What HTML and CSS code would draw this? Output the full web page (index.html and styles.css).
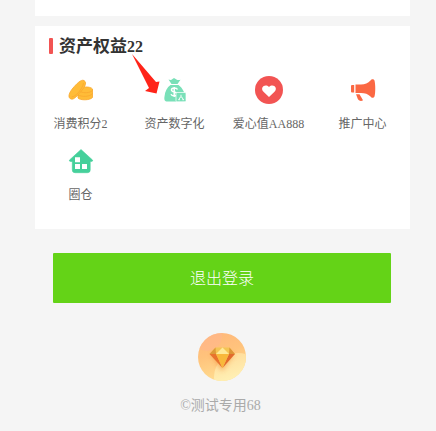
FILE: index.html
```html
<!DOCTYPE html>
<html lang="zh-CN">
<head>
<meta charset="utf-8">
<title>资产权益</title>
<link rel="stylesheet" href="styles.css">
</head>
<body>
<main class="page">
  <div class="previous"></div>
  <section class="card">
    <h2 class="title"><span>资产权益<span class="count">22</span></span></h2>
    <div class="grid">
      <a class="item">
        <svg class="icon" viewBox="0 0 28 28">
          <g fill="#ffbc38" stroke="#f9a72d" stroke-width=".8">
            <path d="M11 17v5c2 2.500 12 2.500 14.500-.5V13c-2-3-12-2.500-14.500 0z"/>
            <path d="M13 15.500c4 2 10 1.500 12.500-1M11 19c4 2 12 2 14.500-1.500" fill="none"/>
            <path d="M4 23c-4-1.500-1.500-7 2-11S14 3 17 4.500c4 2.500-.5 8-3.500 11.500S7 24 4 23z"/>
            <path d="M4.500 21c4 0 11-8 12-14" fill="none"/>
          </g>
        </svg>
        <span class="label">消费积分2</span>
      </a>
      <a class="item">
        <svg class="icon" viewBox="0 0 28 28">
          <g fill="#79e0b8">
            <path d="M7.500 3.500Q10 4.500 11.500 3L13 2l2.500 1.500q1.500 1 4 .2L16.500 8h-6z"/>
            <path d="M9.500 9h8c4 3 7 8 7 14 0 2-1 2.500-3 2.500H6.500c-3 0-3.500-2-3-5C4 15 6 11.500 9.500 9z"/>
          </g>
          <path d="M16.500 13.500c-1-2-6-2-6 .5 0 2.500 5.500 1.500 5.500 4 0 2.500-5 2.500-6 .2M13.200 11v10" fill="none" stroke="#fff" stroke-width="1.500"/>
          <rect x="15" y="16.500" width="10" height="9.200" rx="1" fill="#79e0b8" stroke="#fff" stroke-width=".7"/>
          <path d="M20 18.800v2M17.800 23.500l1.600-2.500h1.300l1.600 2.500M17.300 23.700h1.700M21.300 23.700H23" fill="none" stroke="#fff" stroke-width=".9"/>
        </svg>
        <span class="label">资产数字化</span>
      </a>
      <a class="item">
        <svg class="icon" viewBox="0 0 28 28">
          <circle cx="14" cy="14" r="14" fill="#f25453"/>
          <path d="M14 21l-5.500-5.200c-4-4 1.500-8.800 5.500-4.800 4-4 9.500.8 5.500 4.800z" fill="#fff"/>
        </svg>
        <span class="label">爱心值AA888</span>
      </a>
      <a class="item">
        <svg class="icon" viewBox="0 0 28 28">
          <g fill="#fb6843">
            <path d="M2 10q0-1 1-1h2.200v7.500H3q-1 0-1-1z"/>
            <path d="M6.500 8.500H12c4 0 7-1.500 9.500-4 1-1.500 3-2 4 0 1 4 1 12 0 16-1 2-3 1.500-4 0-2.500-2.500-5.500-3.500-9.500-3.500H6.500z"/>
            <path d="M7 18.300h3.500l3.500 6c-2 1.500-4.500.5-5.500-2z"/>
          </g>
        </svg>
        <span class="label">推广中心</span>
      </a>
      <a class="item">
        <svg class="icon" viewBox="0 0 28 28">
          <path d="M14 2.500L25.500 13q.7 1.300-1 1.500h-1.300V23q0 2.700-2.700 2.700H8Q5.300 25.700 5.300 23v-8.500H3.500Q1.800 14.300 2.500 13z" fill="#45d09b" stroke="#45d09b" stroke-width=".6"/>
          <path d="M8 10.200h5v5H8zM8 17h5v5H8zM15 17h5v5h-5z" fill="#fff"/>
        </svg>
        <span class="label">圈仓</span>
      </a>
    </div>
    <svg class="pointer" viewBox="0 0 28 42"><path d="M0 1L24 29 27.500 28.500 24.500 40.500 13 38 17 35z" fill="#ff2419"/></svg>
  </section>
  <button class="logout" type="button">退出登录</button>
  <footer class="footer">
    <svg class="logo" viewBox="0 0 48 48">
      <defs>
        <linearGradient id="disc" x1="0" y1="0" x2=".3" y2="1"><stop stop-color="#ffb67b"/><stop offset=".5" stop-color="#ffc37c"/><stop offset="1" stop-color="#ffdc90"/></linearGradient>
        <linearGradient id="light" x1="0" y1="0" x2=".3" y2="1"><stop stop-color="#ffd896"/><stop offset=".6" stop-color="#fff0b4"/></linearGradient>
        <clipPath id="round"><circle cx="24" cy="24" r="24"/></clipPath>
        <filter id="soft" x="-50%" y="-50%" width="200%" height="200%"><feGaussianBlur stdDeviation="2.500"/></filter>
      </defs>
      <g clip-path="url(#round)">
        <path d="M0 0h48v48H0z" fill="url(#disc)"/>
        <circle cx="9" cy="3" r="15" fill="#ffb88a" opacity=".7"/>
        <circle cx="40" cy="44" r="24" fill="url(#light)"/>
        <path d="M13 21l11 17 12-17z" fill="#f08b35" opacity=".6" filter="url(#soft)"/>
      </g>
      <path d="M17.500 14.500h14l5.500 6.500H11.500z" fill="#f4c554"/>
      <path d="M17.500 14.500l-6 6.500H18z" fill="#dd9a38"/>
      <path d="M31.500 14.500L37 21h-6z" fill="#dd9436"/>
      <path d="M18 21l6.500-6.500L31 21z" fill="#ffe998"/>
      <path d="M11.500 21H18l6.500 14z" fill="#e8722d"/>
      <path d="M37 21h-6l-6.500 14z" fill="#e26a2c"/>
      <path d="M18 21h13l-6.500 14z" fill="#f8b83b"/>
    </svg>
    <p class="copyright">©测试专用68</p>
  </footer>
</main>
</body>
</html>
```
FILE: styles.css
```css
* {
  box-sizing: border-box;
}

body {
  margin: 0;
  background: #f5f5f5;
  font-family: "Liberation Serif", "Noto Sans CJK SC", serif;
}

.page {
  width: 375px;
  height: 431px;
  margin-left: 35px;
  overflow: hidden;
}

.previous {
  height: 16px;
  margin-bottom: 10px;
  background: #fff;
}

.card {
  position: relative;
  height: 203px;
  padding-top: 10px;
  background: #fff;
}

.title {
  display: flex;
  align-items: center;
  gap: 6px;
  height: 20px;
  margin: 0 0 20px 14px;
  color: #333;
  font-size: 17px;
  font-weight: 600;
  line-height: 22px;
}

.title > span {
  padding-top: 1px;
}

.title::before {
  content: "";
  width: 4px;
  height: 16px;
  border-radius: 1px;
  background: #f25453;
}

.count {
  font-size: 16px;
}

.grid {
  display: grid;
  grid-template-columns: repeat(4, 94px);
  grid-auto-rows: 71px;
  margin-left: -1px;
}

.item {
  display: flex;
  flex-direction: column;
  align-items: center;
  gap: 11px;
  color: #666;
  font-size: 12px;
  line-height: 18px;
  white-space: nowrap;
}

.label {
  margin-right: 1px;
}

.icon {
  width: 28px;
  height: 28px;
}

.pointer {
  position: absolute;
  top: 27px;
  left: 97px;
  width: 28px;
  height: 42px;
}

.logout {
  display: block;
  width: 338px;
  height: 50px;
  margin: 24px 0 30px 18px;
  padding: 1px 0 0;
  border: 0;
  border-radius: 1px;
  background: #64d317;
  color: #fff;
  font: 300 16px/49px "Liberation Serif", "Noto Sans CJK SC", serif;
}

.footer {
  display: flex;
  flex-direction: column;
  align-items: center;
  margin-right: 1px;
}

.logo {
  width: 48px;
  height: 48px;
}

.copyright {
  margin: 15px 3px 0 0;
  color: #aaa;
  font-size: 14px;
  line-height: 20px;
}
```
